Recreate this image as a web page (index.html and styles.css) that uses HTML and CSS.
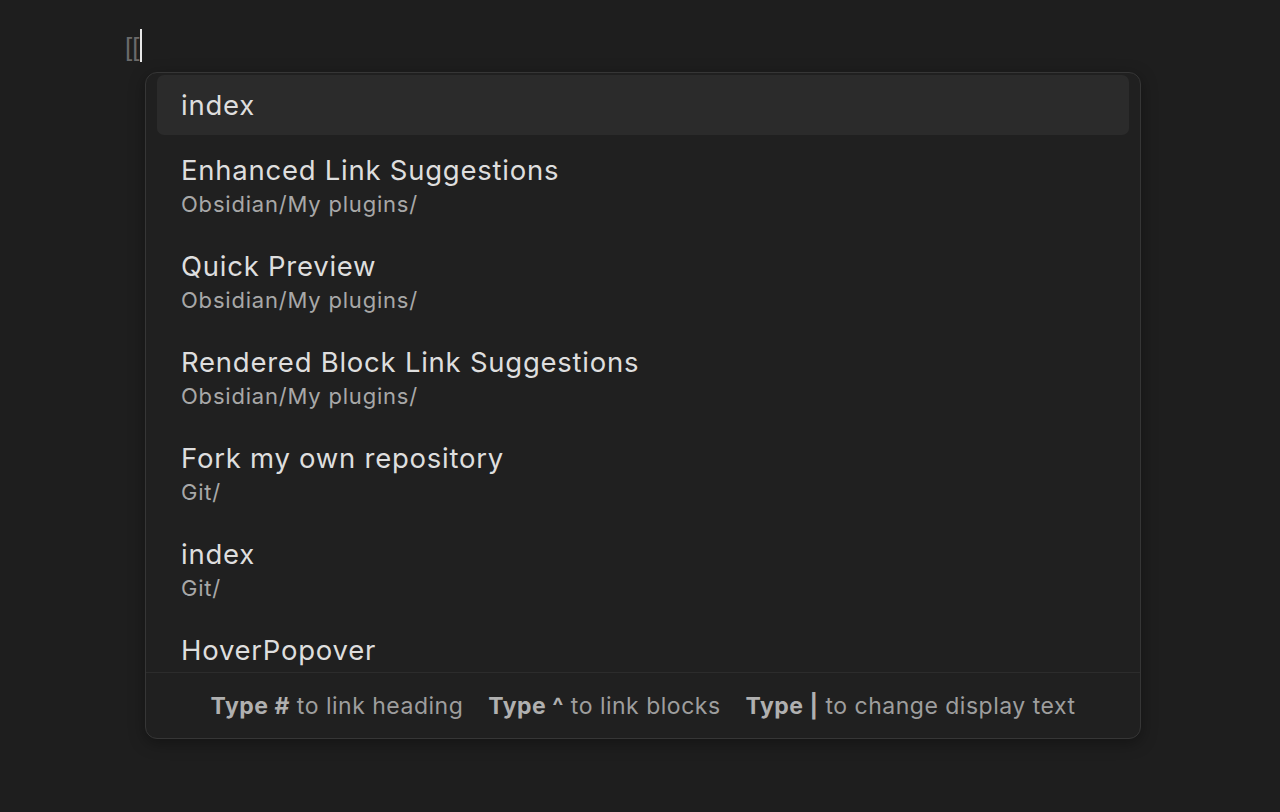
FILE: index.html
```html
<!DOCTYPE html>
<html lang="en">
<head>
<meta charset="utf-8">
<title>Link suggestions</title>
<link rel="stylesheet" href="styles.css">
</head>
<body>
<div class="editor">
  <div class="line"><span class="brackets">[[</span><span class="cursor"></span></div>
  <div class="popover">
    <div class="list">
      <div class="item selected"><div class="title">index</div></div>
      <div class="item"><div class="title">Enhanced Link Suggestions</div><div class="path">Obsidian/My plugins/</div></div>
      <div class="item"><div class="title">Quick Preview</div><div class="path">Obsidian/My plugins/</div></div>
      <div class="item"><div class="title">Rendered Block Link Suggestions</div><div class="path">Obsidian/My plugins/</div></div>
      <div class="item"><div class="title">Fork my own repository</div><div class="path">Git/</div></div>
      <div class="item"><div class="title">index</div><div class="path">Git/</div></div>
      <div class="item"><div class="title">HoverPopover</div></div>
    </div>
    <div class="footer">
      <span class="hint"><b>Type #</b> to link heading</span>
      <span class="hint"><b>Type ^</b> to link blocks</span>
      <span class="hint"><b>Type |</b> to change display text</span>
    </div>
  </div>
</div>
</body>
</html>
```
FILE: styles.css
```css
html, body {
  margin: 0;
  padding: 0;
  background: #1e1e1e;
  width: 1280px;
  height: 812px;
  overflow: hidden;
  font-family: Inter, "Noto Sans", sans-serif;
}
.editor {
  padding: 28px 0 0 125px;
}
.line {
  display: flex;
  align-items: center;
  height: 34px;
}
.brackets {
  font-family: "Liberation Sans", Arial, sans-serif;
  font-size: 26px;
  line-height: 34px;
  color: #6a6a6a;
  padding-top: 4px;
}
.cursor {
  display: inline-block;
  width: 2px;
  height: 33px;
  background: #e8e8e8;
  margin-left: 1px;
}
.popover {
  margin: 10px 0 0 20px;
  width: 994px;
  height: 665px;
  border: 1px solid #363636;
  border-radius: 12px;
  background: #202020;
  box-shadow: 0 4px 16px rgba(0,0,0,0.35);
  display: flex;
  flex-direction: column;
  overflow: hidden;
}
.list {
  flex: 1;
  overflow: hidden;
  padding: 2px 11px 0;
}
.item {
  padding: 18px 24px 10px;
  border-radius: 7px;
}
.item.selected {
  padding: 13px 24px 13px;
  background: #2b2b2b;
}
.title {
  font-size: 27.5px;
  line-height: 34px;
  letter-spacing: 0.75px;
  color: #dedede;
}
.path {
  font-size: 22px;
  line-height: 34px;
  letter-spacing: 0.8px;
  color: #a8a8a8;
}
.footer {
  flex: none;
  height: 65px;
  border-top: 1px solid #2c2c2c;
  display: flex;
  align-items: center;
  justify-content: center;
  gap: 25px;
  font-size: 23px;
  letter-spacing: 0.5px;
  color: #9e9e9e;
}
.footer b {
  color: #b0b0b0;
  font-weight: 700;
}
```
